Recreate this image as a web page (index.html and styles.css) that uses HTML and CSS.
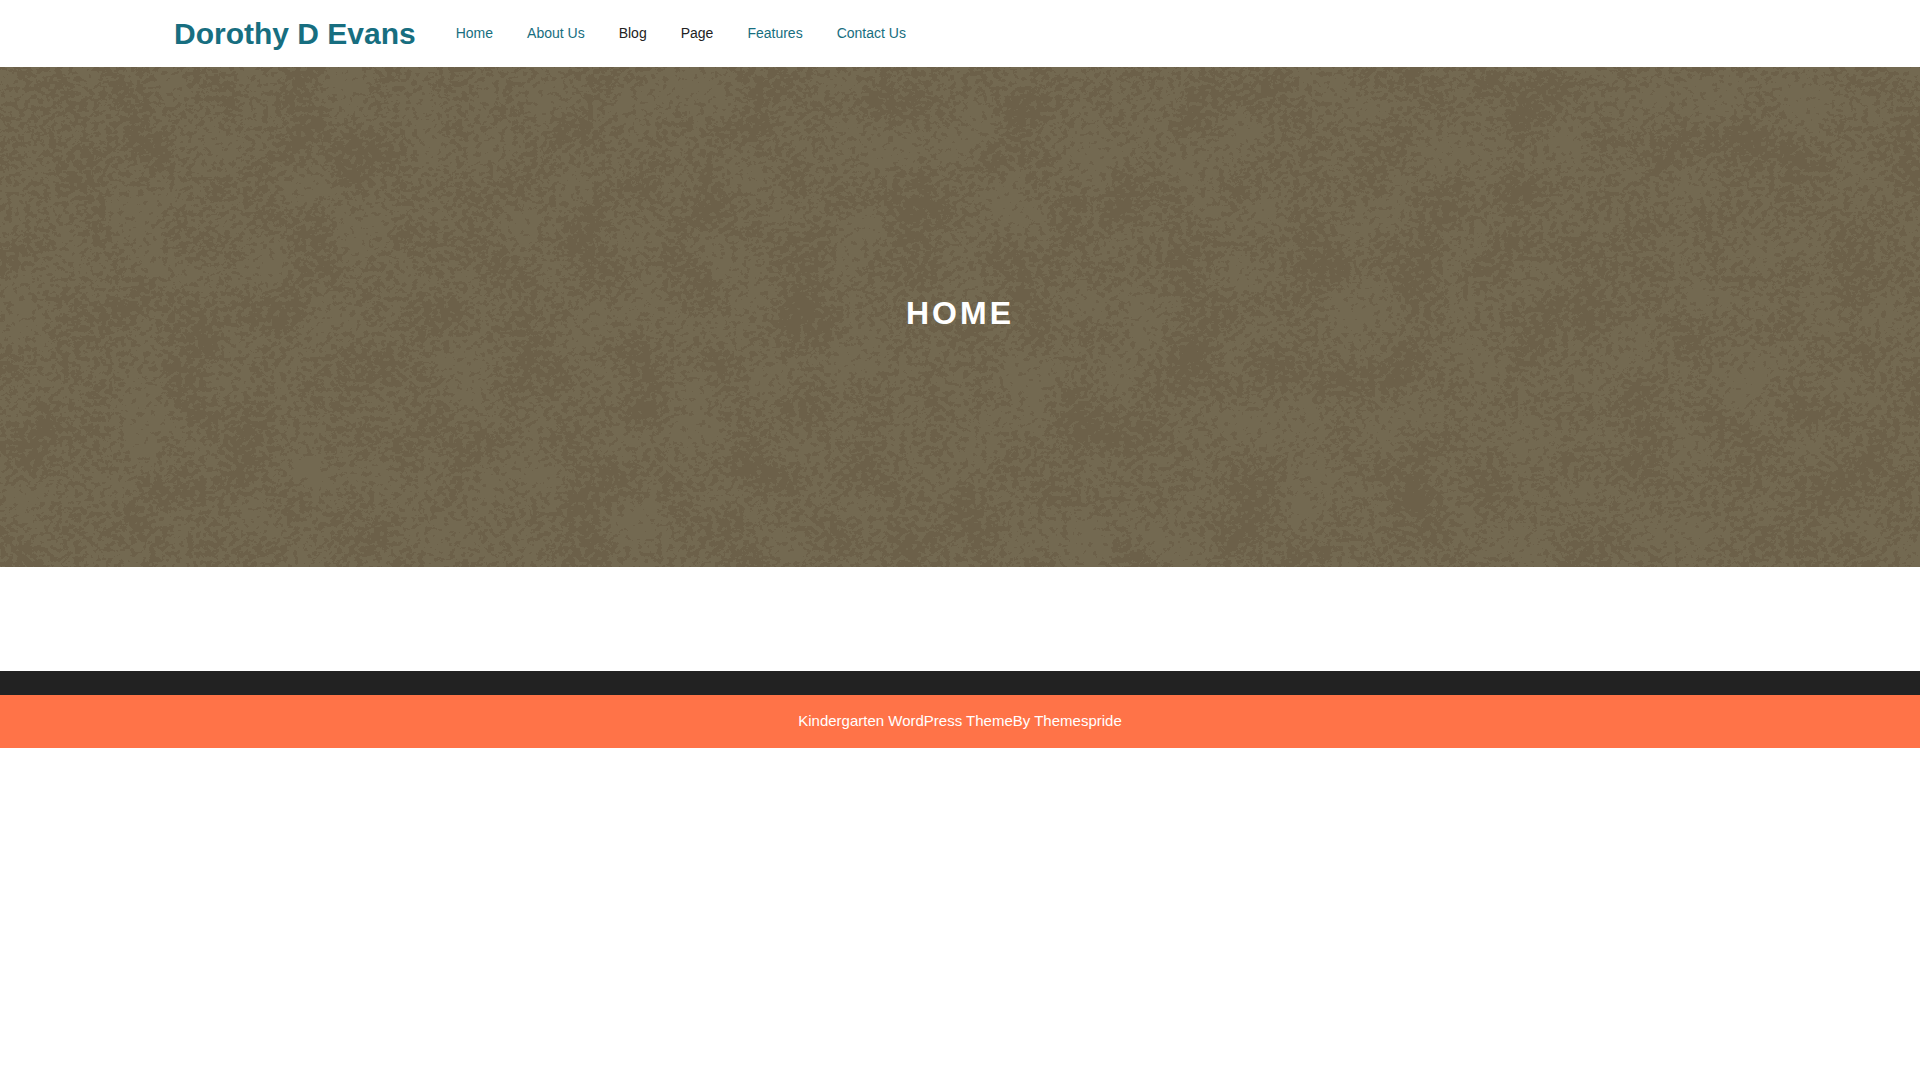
FILE: index.html
```html
<!DOCTYPE html>
<html lang="en">
<head>
<meta charset="utf-8">
<meta name="viewport" content="width=device-width, initial-scale=1">
<title>Dorothy D Evans</title>
<link rel="stylesheet" href="styles.css">
</head>
<body>
<header class="site-header">
  <div class="container header-row">
    <a class="brand" href="#">Dorothy D Evans</a>
    <nav aria-label="Main">
      <ul class="menu">
        <li><a href="#">Home</a></li>
        <li><a href="#">About Us</a></li>
        <li><a class="dark" href="#">Blog</a></li>
        <li><a class="dark" href="#">Page</a></li>
        <li><a href="#">Features</a></li>
        <li><a href="#">Contact Us</a></li>
      </ul>
    </nav>
  </div>
</header>
<main>
  <section class="hero">
    <svg class="texture" aria-hidden="true">
      <filter id="mottle" x="0" y="0" width="100%" height="100%" color-interpolation-filters="sRGB">
        <feTurbulence type="fractalNoise" baseFrequency="0.018" numOctaves="4" seed="21" result="patches"/>
        <feTurbulence type="fractalNoise" baseFrequency="0.16 0.2" numOctaves="3" seed="9" result="speckle"/>
        <feColorMatrix in="patches" values="1 0 0 0 0  1 0 0 0 0  1 0 0 0 0  0 0 0 0 1" result="a"/>
        <feColorMatrix in="speckle" values="1 0 0 0 0  1 0 0 0 0  1 0 0 0 0  0 0 0 0 1" result="b"/>
        <feComposite in="a" in2="b" operator="arithmetic" k2="0.38" k3="0.65"/>
        <feComponentTransfer>
          <feFuncR type="discrete" tableValues="0.424 0.451"/>
          <feFuncG type="discrete" tableValues="0.380 0.412"/>
          <feFuncB type="discrete" tableValues="0.290 0.318"/>
          <feFuncA type="discrete" tableValues="1 1"/>
        </feComponentTransfer>
      </filter>
      <rect width="100%" height="100%" filter="url(#mottle)"/>
    </svg>
    <h1 class="hero-title">HOME</h1>
  </section>
  <div class="page-content"></div>
</main>
<footer>
  <div class="footer-widgets"></div>
  <div class="site-info"><a href="#">Kindergarten WordPress Theme</a>By Themespride</div>
</footer>
</body>
</html>
```
FILE: styles.css
```css
* {
  box-sizing: border-box;
}

body {
  margin: 0;
  background: #fff;
  color: #212529;
  font: 15px/24px "Liberation Sans", Arial, sans-serif;
}

a {
  color: inherit;
  text-decoration: none;
}

.container {
  max-width: 1600px;
  margin: 0 auto;
  padding: 0 14px;
}

.site-header {
  padding: 11px 0;
  background: #fff;
  color: #176e80;
}

.header-row {
  display: flex;
  align-items: center;
  gap: 40px;
}

.brand {
  font-size: 30px;
  line-height: 45px;
  font-weight: 700;
}

.menu {
  display: flex;
  gap: 34px;
  margin: 0;
  padding: 0 0 2px;
  list-style: none;
  font-size: 14px;
}

.menu .dark {
  color: #222;
}

.hero {
  position: relative;
  display: flex;
  align-items: center;
  justify-content: center;
  min-height: 500px;
  padding-bottom: 8px;
  background: #6f654e;
}

.texture {
  position: absolute;
  inset: 0;
  width: 100%;
  height: 100%;
}

.hero-title {
  position: relative;
  margin: 0;
  color: #fff;
  font-size: 32px;
  line-height: 40px;
  letter-spacing: 3px;
}

.page-content {
  padding: 52px 0;
}

.footer-widgets {
  padding: 12px 0;
  background: #222;
}

.site-info {
  padding: 14px 16px 16px;
  background: #ff7348;
  color: #fff;
  line-height: 23px;
  text-align: center;
}
```
